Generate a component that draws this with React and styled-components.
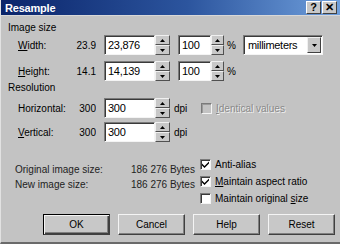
import React from "react";
import styled, { createGlobalStyle } from "styled-components";

const Global = createGlobalStyle`
  html, body { margin: 0; padding: 0; background: #c3c3c3; }
  body { font-family: "Liberation Sans", Arial, sans-serif; font-size: 10px; color: #000; }
  * { box-sizing: border-box; }
`;

const Window = styled.div`
  width: 340px;
  height: 244px;
  background: #c3c3c3;
  display: flex;
  flex-direction: column;
  overflow: hidden;
  border-bottom: 2px solid #6a6a6a;
  border-left: 1px solid #e2e2e2;
`;

const TitleBar = styled.div`
  height: 16px;
  flex: none;
  background: linear-gradient(90deg, #0a246a 0%, #2c559e 55%, #6f9fdc 100%);
  display: flex;
  align-items: center;
  padding: 0 3px 0 4px;
  border-bottom: 1px solid #d8d8d8;
`;

const Title = styled.div`
  color: #fff;
  font-weight: bold;
  font-size: 11px;
  letter-spacing: -0.2px;
  flex: 1;
`;

const TitleButton = styled.div`
  width: 15px;
  height: 13px;
  margin-left: ${(p) => (p.$gap ? "1px" : "0")};
  background: #c8c8c8;
  border: 1px solid;
  border-color: #fff #404040 #404040 #fff;
  display: flex;
  align-items: center;
  justify-content: center;
  font-weight: bold;
  font-size: 11px;
  line-height: 1;
`;

const Body = styled.div`
  flex: 1;
  display: flex;
  flex-direction: column;
  padding: 0 5px 0 7px;
`;

const GroupLabel = styled.div`
  height: 12px;
  line-height: 12px;
  margin-top: ${(p) => p.$top}px;
`;

const Rows = styled.div`
  display: flex;
  flex-direction: column;
  gap: ${(p) => p.$gap}px;
  margin-top: ${(p) => p.$top}px;
  padding-left: 10px;
`;

const Row = styled.div`
  display: flex;
  align-items: center;
  height: 20px;
`;

const Label = styled.div`
  width: 55px;
  flex: none;
`;

const Value = styled.div`
  width: 23px;
  flex: none;
  text-align: right;
  margin-right: 8px;
  white-space: nowrap;
  overflow: hidden;
`;

const Field = styled.div`
  width: ${(p) => p.$w}px;
  height: 20px;
  flex: none;
  background: #fff;
  border: 1px solid;
  border-color: #7a7a7a #f4f4f4 #f4f4f4 #7a7a7a;
  box-shadow: inset 1px 1px 0 #3a3a3a;
  padding: 0 0 0 3px;
  display: flex;
  align-items: center;
  font-size: 11px;
  letter-spacing: -0.3px;
`;

const Spin = styled.div`
  width: ${(p) => p.$w}px;
  height: 20px;
  flex: none;
  display: flex;
  flex-direction: column;
  margin-right: ${(p) => p.$mr}px;
`;

const SpinHalf = styled.div`
  flex: 1;
  background: #c8c8c8;
  border: 1px solid;
  border-color: #f0f0f0 #505050 #505050 #f0f0f0;
  display: flex;
  align-items: center;
  justify-content: center;
`;

const Arrow = ({ up }) => (
  <svg width="5" height="3" viewBox="0 0 5 3">
    <path d={up ? "M2.5 0 L5 3 L0 3 Z" : "M0 0 L5 0 L2.5 3 Z"} fill="#000" />
  </svg>
);

const Spinner = ({ w = 14, mr = 0 }) => (
  <Spin $w={w} $mr={mr}>
    <SpinHalf><Arrow up /></SpinHalf>
    <SpinHalf><Arrow /></SpinHalf>
  </Spin>
);

const Unit = styled.div`
  width: ${(p) => p.$w}px;
  flex: none;
`;

const Select = styled.div`
  width: 80px;
  height: 20px;
  flex: none;
  background: #fff;
  border: 1px solid;
  border-color: #7a7a7a #f4f4f4 #f4f4f4 #7a7a7a;
  box-shadow: inset 1px 1px 0 #3a3a3a;
  display: flex;
  align-items: center;
  padding: 1px 1px 1px 4px;
  font-size: 11px;
  letter-spacing: -0.3px;
`;

const SelectText = styled.div`
  flex: 1;
`;

const DropButton = styled.div`
  width: 14px;
  height: 16px;
  background: #c8c8c8;
  border: 1px solid;
  border-color: #f0f0f0 #404040 #404040 #f0f0f0;
  display: flex;
  align-items: center;
  justify-content: center;
`;

const U = styled.span`
  text-decoration: underline;
`;

const Check = styled.div`
  width: 11px;
  height: 11px;
  flex: none;
  background: ${(p) => (p.$disabled ? "#c3c3c3" : "#fff")};
  border: 1px solid;
  border-color: #7a7a7a #f4f4f4 #f4f4f4 #7a7a7a;
  box-shadow: inset 1px 1px 0 ${(p) => (p.$disabled ? "#9a9a9a" : "#3a3a3a")};
  display: flex;
  align-items: center;
  justify-content: center;
  margin-right: 4px;
`;

const CheckMark = () => (
  <svg width="7" height="7" viewBox="0 0 7 7">
    <path d="M0 2.5 L2.5 5 L7 0.5 L7 2.5 L2.5 7 L0 4.5 Z" fill="#000" />
  </svg>
);

const CheckRow = styled.div`
  display: flex;
  align-items: center;
  height: ${(p) => p.$h || 17}px;
  color: ${(p) => (p.$dim ? "#8a8a8a" : "#000")};
  text-shadow: ${(p) => (p.$dim ? "1px 1px 0 #f0f0f0" : "none")};
`;

const Lower = styled.div`
  display: flex;
  margin-top: 14px;
`;

const Info = styled.div`
  width: 192px;
  flex: none;
  padding: 6px 0 0 7px;
  display: flex;
  flex-direction: column;
`;

const InfoRow = styled.div`
  display: flex;
  height: 15px;
  align-items: center;
  color: #222;
`;

const InfoLabel = styled.div`
  width: 116px;
`;

const Checks = styled.div`
  display: flex;
  flex-direction: column;
`;

const Buttons = styled.div`
  display: flex;
  justify-content: flex-end;
  gap: 8px;
  margin-top: 7px;
`;

const Button = styled.div`
  width: 67px;
  height: 21px;
  background: #c8c8c8;
  display: flex;
  align-items: center;
  justify-content: center;
  border: 1px solid ${(p) => (p.$default ? "#000" : "#f4f4f4")};
  box-shadow: ${(p) =>
    p.$default
      ? "inset 1px 1px 0 #f4f4f4, inset -1px -1px 0 #404040, inset -2px -2px 0 #808080"
      : "inset -1px -1px 0 #808080"};
  border-right-color: #404040;
  border-bottom-color: #404040;
`;

export default function App() {
  return (
    <Window>
      <Global />
      <TitleBar>
        <Title>Resample</Title>
        <TitleButton>?</TitleButton>
        <TitleButton $gap>✕</TitleButton>
      </TitleBar>
      <Body>
        <GroupLabel $top={6}>Image size</GroupLabel>
        <Rows $gap={6} $top={1}>
          <Row>
            <Label><U>W</U>idth:</Label>
            <Value>23.9</Value>
            <Field $w={51}>23,876</Field>
            <Spinner w={15} mr={8} />
            <Field $w={33}>100</Field>
            <Spinner w={13} mr={3} />
            <Unit $w={16}>%</Unit>
            <Select>
              <SelectText>millimeters</SelectText>
              <DropButton><Arrow /></DropButton>
            </Select>
          </Row>
          <Row>
            <Label><U>H</U>eight:</Label>
            <Value>14.1</Value>
            <Field $w={51}>14,139</Field>
            <Spinner w={15} mr={8} />
            <Field $w={33}>100</Field>
            <Spinner w={13} mr={3} />
            <Unit $w={16}>%</Unit>
          </Row>
        </Rows>
        <GroupLabel $top={1}>Resolution</GroupLabel>
        <Rows $gap={4} $top={4}>
          <Row>
            <Label>Horizontal:</Label>
            <Value>300</Value>
            <Field $w={51}>300</Field>
            <Spinner w={15} mr={4} />
            <Unit $w={27}>dpi</Unit>
            <CheckRow $dim $h={20}>
              <Check $disabled />
              <span><U>I</U>dentical values</span>
            </CheckRow>
          </Row>
          <Row>
            <Label><U>V</U>ertical:</Label>
            <Value>300</Value>
            <Field $w={51}>300</Field>
            <Spinner w={15} mr={4} />
            <Unit $w={27}>dpi</Unit>
          </Row>
        </Rows>
        <Lower>
          <Info>
            <InfoRow>
              <InfoLabel>Original image size:</InfoLabel>
              <span>186 276 Bytes</span>
            </InfoRow>
            <InfoRow>
              <InfoLabel>New image size:</InfoLabel>
              <span>186 276 Bytes</span>
            </InfoRow>
          </Info>
          <Checks>
            <CheckRow>
              <Check><CheckMark /></Check>
              <span>Anti-alias</span>
            </CheckRow>
            <CheckRow>
              <Check><CheckMark /></Check>
              <span><U>M</U>aintain aspect ratio</span>
            </CheckRow>
            <CheckRow>
              <Check />
              <span>Maintain original <U>s</U>ize</span>
            </CheckRow>
          </Checks>
        </Lower>
        <Buttons>
          <Button $default>OK</Button>
          <Button>Cancel</Button>
          <Button>Help</Button>
          <Button>Reset</Button>
        </Buttons>
      </Body>
    </Window>
  );
}
